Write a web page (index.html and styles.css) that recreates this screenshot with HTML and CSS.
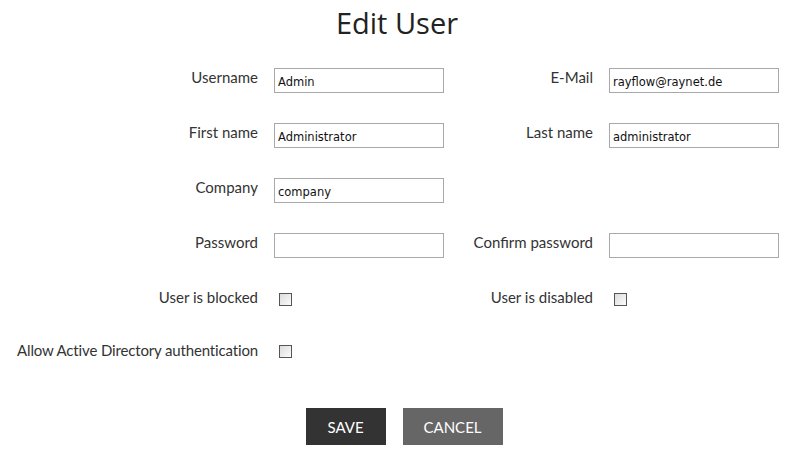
FILE: index.html
```html
<!DOCTYPE html>
<html>
<head>
<meta charset="utf-8">
<link rel="stylesheet" href="styles.css">
</head>
<body>
<div class="page">
  <h1 class="title">Edit User</h1>
  <form class="form">
    <label class="lbl">Username</label>
    <input class="field" type="text" value="Admin">
    <label class="lbl">E-Mail</label>
    <input class="field" type="text" value="rayflow@raynet.de">

    <label class="lbl">First name</label>
    <input class="field" type="text" value="Administrator">
    <label class="lbl">Last name</label>
    <input class="field" type="text" value="administrator">

    <label class="lbl">Company</label>
    <input class="field" type="text" value="company">
    <span></span><span></span>

    <label class="lbl">Password</label>
    <input class="field" type="password" value="">
    <label class="lbl">Confirm password</label>
    <input class="field" type="password" value="">

    <label class="lbl">User is blocked</label>
    <span class="check-cell"><span class="check"></span></span>
    <label class="lbl">User is disabled</label>
    <span class="check-cell"><span class="check"></span></span>

    <label class="lbl lbl-long">Allow Active Directory authentication</label>
    <span class="check-cell"><span class="check"></span></span>
    <span></span><span></span>
  </form>
  <div class="actions">
    <button class="btn btn-save" type="button">SAVE</button>
    <button class="btn btn-cancel" type="button">CANCEL</button>
  </div>
</div>
</body>
</html>
```

FILE: styles.css
```css
html, body {
  margin: 0;
  padding: 0;
  background: #ffffff;
}

.page {
  width: 794px;
  font-family: "Lato", "Liberation Sans", sans-serif;
  color: #333333;
}

.title {
  margin: 0;
  padding-top: 3px;
  height: 45px;
  text-align: center;
  font-family: "Open Sans", "Liberation Sans", sans-serif;
  font-weight: 400;
  font-size: 29px;
  line-height: 40px;
  color: #222222;
}

.form {
  display: grid;
  grid-template-columns: 242px 170px 133px 170px;
  grid-template-rows: repeat(4, 25px) 22px 22px;
  column-gap: 16px;
  row-gap: 30px;
  padding: 20px 0 0 16px;
}

.lbl {
  text-align: right;
  font-size: 15px;
  line-height: 18px;
  white-space: nowrap;
  color: #333333;
}

.lbl-long {
  letter-spacing: -0.15px;
  padding-top: 1px;
}

.field {
  box-sizing: border-box;
  width: 170px;
  height: 25px;
  margin: 0;
  border: 1px solid #a9a9a9;
  padding: 2px 3px 0;
  font-family: "DejaVu Sans", sans-serif;
  font-size: 11.5px;
  color: #111111;
  background: #ffffff;
  outline: none;
}

.check-cell {
  display: flex;
  align-items: flex-start;
  padding-top: 5px;
  padding-left: 5px;
}

.check {
  box-sizing: border-box;
  width: 13px;
  height: 13px;
  border: 1px solid #555555;
  background: linear-gradient(135deg, #dcdcdc, #fbfbfb);
}

.actions {
  display: flex;
  justify-content: center;
  gap: 17px;
  padding: 0 0 0 14px;
  margin-top: 46px;
}

.btn {
  height: 37px;
  border: none;
  margin: 0;
  padding: 0;
  color: #ffffff;
  font-family: "Lato", "Liberation Sans", sans-serif;
  font-size: 15px;
  cursor: pointer;
}

.btn-save {
  width: 80px;
  background: #333333;
}

.btn-cancel {
  width: 100px;
  background: #666666;
}
```
